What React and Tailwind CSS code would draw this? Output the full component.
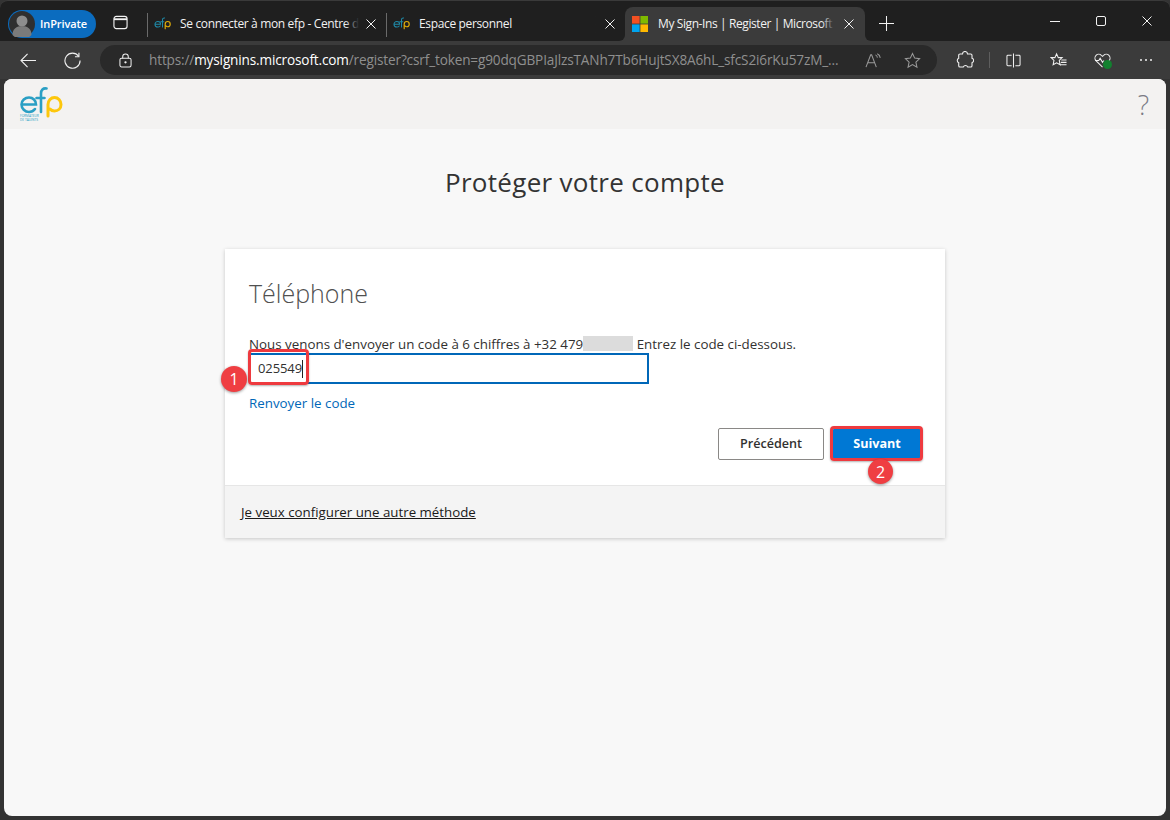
import React from "react";

function EfpLogo({ className, tagline, dim }) {
  const blue = dim ? "#1f8aa8" : "#2a9fc4";
  const yellow = dim ? "#e0ad0a" : "#fdc70c";
  return (
    <svg viewBox="0 0 44 34" className={className} fill="none">
      <path d="M2.500 17.500h14.500c0-4-3-7-7-7s-7.500 3-7.500 7S6 25 10 25c2.500 0 4.500-1 6-3" stroke={blue} strokeWidth="2.600" strokeLinecap="round" />
      <path d="M27.500 1.500c-3.500-.5-5.500 1.500-5.500 5V25M17.500 11h8" stroke={blue} strokeWidth="2.600" strokeLinecap="round" />
      <path d="M29 29V17.500c0-4 3-7 6.500-7S42 13.500 42 17.500 39 24 35.500 24c-2 0-3.500-.8-4.500-2" stroke={yellow} strokeWidth="3" strokeLinecap="round" />
      {tagline && (
        <text x="1" y="29.500" fontSize="3.200" fill="#2a9fc4" fontFamily="'Open Sans', sans-serif">FORMATEUR</text>
      )}
      {tagline && (
        <text x="1" y="33.500" fontSize="3.200" fill="#2a9fc4" fontFamily="'Open Sans', sans-serif">DE TALENTS</text>
      )}
    </svg>
  );
}

function MsLogo() {
  return (
    <svg viewBox="0 0 16 16" className="w-[16px] h-[16px] shrink-0">
      <rect x="0" y="0" width="7.600" height="7.600" fill="#f25022" />
      <rect x="8.400" y="0" width="7.600" height="7.600" fill="#7fba00" />
      <rect x="0" y="8.400" width="7.600" height="7.600" fill="#00a4ef" />
      <rect x="8.400" y="8.400" width="7.600" height="7.600" fill="#ffb900" />
    </svg>
  );
}

function Close({ className = "w-[10px] h-[10px]", color = "#f2f2f2" }) {
  return (
    <svg viewBox="0 0 10 10" className={className} fill="none" stroke={color} strokeWidth="1">
      <path d="M.5.5l9 9M9.500.5l-9 9" />
    </svg>
  );
}

function Tab({ title }) {
  return (
    <div className="flex items-center h-full w-full pb-[1px]">
      <EfpLogo dim className="w-[17px] h-[14px] shrink-0" />
      <span className="relative ml-[9px] text-[12px] tracking-[-0.35px] text-[#f2f2f2] whitespace-nowrap overflow-hidden w-[180px]">
        {title}
        <span className="absolute right-0 top-0 bottom-0 w-[14px] bg-gradient-to-r from-transparent to-[#1f1f1f]" />
      </span>
      <span className="ml-auto flex items-center justify-center w-[24px] mr-[3px]"><Close /></span>
    </div>
  );
}

function Avatar() {
  return (
    <svg viewBox="0 0 26 26" className="w-[26px] h-[26px] ml-px shrink-0">
      <circle cx="13" cy="13" r="13" fill="#2f2f2f" />
      <circle cx="13" cy="10" r="5.500" fill="#8d8d8d" />
      <path d="M3.500 24c0-6 4-9 9.500-9s9.500 3 9.500 9a13 13 0 0 1-19 0z" fill="#7b7b7b" />
    </svg>
  );
}

export default function App() {
  return (
    <div className="w-[1170px] h-[820px] bg-[#333333] overflow-hidden flex flex-col font-['Open_Sans','Noto_Sans',sans-serif]">
      {/* title strip */}
      <div className="h-[41px] shrink-0 bg-[#1f1f1f] border-t border-[#3a3a3a] flex items-stretch pl-[8px] rounded-t-[8px]">
        <div className="flex items-center h-[28px] w-[88px] mt-[9px] rounded-full bg-[#0b6cbf]">
          <Avatar />
          <span className="ml-[5px] text-[11px] font-semibold text-white tracking-[-0.1px]">InPrivate</span>
        </div>
        <div className="w-[48px] mr-[3px] flex items-center justify-center shrink-0 pt-[3px]">
          <svg viewBox="0 0 16 16" className="w-[15px] h-[15px]" fill="none" stroke="#f2f2f2" strokeWidth="1.200">
            <rect x="1" y="1.500" width="14" height="13" rx="2.500" />
            <path d="M1 4.500h14" strokeWidth="2" />
          </svg>
        </div>
        <div className="w-px h-[24px] mt-[12px] bg-[#6a6a6a] shrink-0 mr-[6px]" />
        <div className="w-[232px] shrink-0 mt-[7px]">
          <Tab title="Se connecter à mon efp - Centre de" />
        </div>
        <div className="w-px h-[24px] mt-[12px] bg-[#6a6a6a] shrink-0 mr-[6px]" />
        <div className="w-[232px] shrink-0 mt-[7px]">
          <Tab title="Espace personnel" />
        </div>
        <div className="flex items-end h-full">
          <div className="relative flex items-center h-[34px] w-[240px] bg-[#3b3b3b] rounded-t-[8px] pl-[7px] pr-[4px]">
            <span className="absolute -left-[6px] bottom-0 w-[6px] h-[6px] bg-[#3b3b3b]"><span className="block w-full h-full bg-[#1f1f1f] rounded-br-[6px]" /></span>
            <span className="absolute -right-[6px] bottom-0 w-[6px] h-[6px] bg-[#3b3b3b]"><span className="block w-full h-full bg-[#1f1f1f] rounded-bl-[6px]" /></span>
            <MsLogo />
            <span className="relative ml-[10px] text-[12px] tracking-[-0.4px] text-[#f2f2f2] whitespace-nowrap overflow-hidden w-[176px]">
              My Sign-Ins | Register | Microsoft Azure
              <span className="absolute right-0 top-0 bottom-0 w-[12px] bg-gradient-to-r from-transparent to-[#3b3b3b]" />
            </span>
            <span className="ml-auto flex items-center justify-center w-[24px]"><Close /></span>
          </div>
        </div>
        <div className="w-[42px] flex items-center justify-center pt-[5px]">
          <svg viewBox="0 0 16 16" className="w-[15px] h-[15px]" stroke="#f2f2f2" strokeWidth="1.100"><path d="M8 0v16M0 8h16" /></svg>
        </div>
        <div className="ml-auto flex items-start">
          <div className="w-[46px] h-[40px] flex items-center justify-center"><span className="block w-[10px] h-px bg-[#f2f2f2]" /></div>
          <div className="w-[46px] h-[40px] flex items-center justify-center"><span className="block w-[10px] h-[10px] rounded-[2px] border border-[#f2f2f2]" /></div>
          <div className="w-[46px] h-[40px] flex items-center justify-center"><Close className="w-[10px] h-[10px]" /></div>
        </div>
      </div>

      {/* toolbar */}
      <div className="h-[38px] shrink-0 bg-[#3b3b3b] flex items-center">
        <div className="w-[55px] flex justify-center pl-[2px]">
          <svg viewBox="0 0 18 16" className="w-[17px] h-[15px]" fill="none" stroke="#f0f0f0" strokeWidth="1.200"><path d="M17 8H1M8 1L1 8l7 7" /></svg>
        </div>
        <div className="w-[34px] flex justify-center">
          <svg viewBox="0 0 18 18" className="w-[17px] h-[17px]" fill="none" stroke="#f0f0f0" strokeWidth="1.200"><path d="M15.500 4.500A8 8 0 1 0 17 9" /><path d="M15.800 .8v4.200h-4.200" /></svg>
        </div>
        <div className="ml-[11px] w-[837px] h-[30px] rounded-full bg-[#292929] flex items-center">
          <svg viewBox="0 0 14 16" className="ml-[19px] w-[13px] h-[15px] shrink-0" fill="none" stroke="#f0f0f0" strokeWidth="1.100">
            <rect x="1" y="5.500" width="12" height="9.500" rx="1.800" />
            <path d="M4 5.500V4a3 3 0 0 1 6 0v1.500" />
            <circle cx="7" cy="10" r=".7" fill="#f0f0f0" />
          </svg>
          <span className="ml-[17px] text-[13.600px] tracking-[-0.15px] whitespace-nowrap overflow-hidden w-[692px] text-[#8f8f8f]">
            https://<span className="text-white">mysignins.microsoft.com</span>/register?csrf_token=g90dqGBPIaJlzsTANh7Tb6HujtSX8A6hL_sfcS2i6rKu57zM_...
          </span>
          <svg viewBox="0 0 18 16" className="ml-[24px] w-[17px] h-[15px] shrink-0" fill="none" stroke="#9a9a9a" strokeWidth="1.100">
            <path d="M1 15L6 2h1l5 13M3 10.500h7" />
            <path d="M11 2c1.500.5 2 1.500 2.200 3M13 .8c2 .8 3 2.400 3.200 4.400" />
          </svg>
          <svg viewBox="0 0 18 18" className="ml-[22px] w-[17px] h-[17px] shrink-0" fill="none" stroke="#9a9a9a" strokeWidth="1.100">
            <path d="M9 1.500l2.300 5 5.200.6-3.900 3.600 1.100 5.300L9 13.300 4.300 16l1.100-5.300L1.500 7.100l5.200-.6z" />
          </svg>
        </div>
        <div className="w-[48px] flex justify-center ml-[4px]">
          <svg viewBox="0 0 18 18" className="w-[18px] h-[18px]" fill="none" stroke="#f0f0f0" strokeWidth="1.100">
            <path d="M6.500 3a2.500 2.500 0 0 1 5 0h3.200a1.300 1.300 0 0 1 1.300 1.300v3a2.300 2.300 0 0 1 0 4.400v3a1.300 1.300 0 0 1-1.300 1.300h-3a2.400 2.400 0 0 0-4.400 0H4a1.300 1.300 0 0 1-1.300-1.300v-3a2.400 2.400 0 0 1 0-4.400V4.300A1.300 1.300 0 0 1 4 3z" />
          </svg>
        </div>
        <div className="w-px h-[16px] bg-[#5e5e5e]" />
        <div className="w-[48px] flex justify-center -ml-[1px]">
          <svg viewBox="0 0 16 16" className="w-[15px] h-[15px]" fill="none" stroke="#f0f0f0" strokeWidth="1.100">
            <path d="M6 2.500H2a1 1 0 0 0-1 1v9a1 1 0 0 0 1 1h4M10 2.500h4a1 1 0 0 1 1 1v9a1 1 0 0 1-1 1h-4M8 .5v15" />
          </svg>
        </div>
        <div className="w-[42px] flex justify-center">
          <svg viewBox="0 0 18 16" className="w-[17px] h-[16px]" fill="none" stroke="#f0f0f0" strokeWidth="1.100">
            <path d="M7 1.500l1.800 4h4l-3 2.900.9 4.600L7 11l-3.700 2 .9-4.600-3-2.900h4z" />
            <path d="M12 8h5.500M11.500 10.500h6M10.500 13h7" />
          </svg>
        </div>
        <div className="relative w-[46px] flex justify-center">
          <svg viewBox="0 0 18 16" className="w-[17px] h-[15px]" fill="none" stroke="#f0f0f0" strokeWidth="1.100">
            <path d="M9 15L2.200 8.300a4 4 0 0 1 5.600-5.800L9 3.600l1.200-1.100a4 4 0 0 1 5.600 5.800" />
            <path d="M1 8h4l1.500-2.500L9 10l1.500-2" />
          </svg>
          <span className="absolute left-[24px] top-[7px] w-[9px] h-[9px] rounded-full bg-[#12812f]" />
        </div>
        <div className="w-[42px] flex justify-center gap-[3px]">
          <span className="w-[2px] h-[2px] bg-[#f0f0f0] rounded-full" />
          <span className="w-[2px] h-[2px] bg-[#f0f0f0] rounded-full" />
          <span className="w-[2px] h-[2px] bg-[#f0f0f0] rounded-full" />
        </div>
      </div>

      {/* page */}
      <div className="flex-1 mx-[4px] mb-[4px] bg-[#f8f8f8] rounded-[8px] overflow-hidden flex flex-col">
        <div className="h-[50px] shrink-0 bg-[#f3f2f1] flex items-center justify-between pl-[15px] pr-[17px]">
          <EfpLogo tagline className="w-[44px] h-[34px]" />
          <span className="text-[27px] font-light text-[#7b7b85] leading-none mt-[1px]">?</span>
        </div>
        <h1 className="mt-[33px] text-center text-[26px] leading-[40px] font-normal text-[#333333] tracking-[0.3px]">Protéger votre compte</h1>

        <div className="mt-[47px] ml-[221px] w-[720px] bg-white shadow-[0_1px_4px_rgba(0,0,0,0.2)]">
          <div className="h-[236px] pl-[24px] pr-[24px] pt-[24px] flex flex-col">
            <h2 className="text-[25px] leading-[40px] font-light text-[#505050]">Téléphone</h2>
            <p className="mt-[22px] h-[18px] text-[13.350px] leading-[18px] text-[#323130] whitespace-nowrap">
              Nous venons d'envoyer un code à 6 chiffres à +32 479<span className="inline-block w-[50px] h-[15px] bg-[#dcdcdc] align-[-2px]" /> Entrez le code ci-dessous.
            </p>
            <div className="relative w-[400px] h-[31px] border-2 border-[#0067b8] bg-white flex items-center pl-[7px] shrink-0">
              <span className="text-[13px] text-[#323130] tracking-[-0.1px]">025549</span>
              <span className="w-px h-[18px] bg-[#222222]" />
              <span className="absolute -left-[3px] -top-[6px] w-[61px] h-[36px] rounded-[4px] border-[3px] border-[#ee3a3f] shadow-[0_1px_2px_rgba(0,0,0,0.3)]" />
              <span className="absolute -left-[30px] top-[11px] w-[26px] h-[26px] rounded-full bg-[#ef3e42] flex items-center justify-center text-white text-[16px] shadow-[0_1px_3px_rgba(0,0,0,0.4)]">1</span>
            </div>
            <a className="mt-[10px] text-[13.350px] leading-[18px] text-[#0067b8]">Renvoyer le code</a>
            <div className="mt-[16px] flex justify-end gap-[9px]">
              <button className="w-[106px] h-[32px] border border-[#8a8886] rounded-[2px] bg-white text-[12.600px] font-semibold text-[#323130]">Précédent</button>
              <div className="relative w-[88px] h-[32px]">
                <button className="w-full h-full bg-[#0078d4] text-white text-[12.600px] font-bold rounded-[2px]">Suivant</button>
                <span className="absolute -left-[3px] -right-[2px] -top-[2px] -bottom-[1px] rounded-[4px] border-[3px] border-[#ee3a3f] shadow-[0_1px_2px_rgba(0,0,0,0.3)]" />
                <span className="absolute left-[35px] top-[31px] w-[25px] h-[25px] rounded-full bg-[#ef3e42] flex items-center justify-center text-white text-[16px] shadow-[0_1px_3px_rgba(0,0,0,0.4)]">2</span>
              </div>
            </div>
          </div>
          <div className="h-[53px] bg-[#f4f4f4] border-t border-[#e6e6e6] pl-[16px] pt-[1px] flex items-center">
            <a className="text-[13.300px] underline text-[#1b1a19]">Je veux configurer une autre méthode</a>
          </div>
        </div>
      </div>
    </div>
  );
}
